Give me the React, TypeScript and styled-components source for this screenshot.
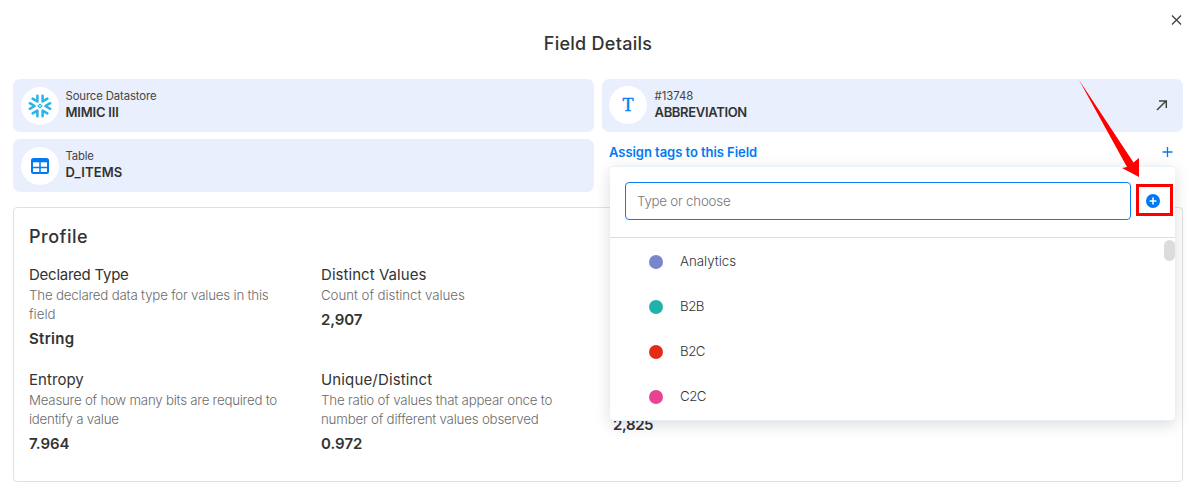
import React from "react";
import styled, { createGlobalStyle } from "styled-components";

const Global = createGlobalStyle`
  * { box-sizing: border-box; }
  body { margin: 0; background: #fff; color: #333; font-family: Inter, "Liberation Sans", sans-serif; }
`;

const Dialog = styled.main`
  position: relative;
  width: 1196px;
  height: 494px;
  padding: 0 13px;
  overflow: hidden;
  display: flex;
  flex-direction: column;
`;
const Header = styled.header`
  height: 79px;
  padding-top: 32px;
  text-align: center;
`;
const Title = styled.h1<{ $track?: number }>`
  margin: 0;
  font-size: 18px;
  line-height: 24px;
  font-weight: 500;
  white-space: nowrap;
  letter-spacing: ${(p) => p.$track ?? 0}px;
`;
const CloseButton = styled.button`
  position: absolute;
  top: 15px;
  right: 14px;
  width: 11px;
  height: 11px;
  padding: 0;
  border: 0;
  background: none;
  svg { display: block; }
`;
const Columns = styled.section`
  display: grid;
  grid-template-columns: 1fr 1fr;
  column-gap: 8px;
  height: 128px;
`;
const Column = styled.div`
  position: relative;
  display: flex;
  flex-direction: column;
  gap: 7px;
`;
const InfoCard = styled.div`
  height: 53px;
  border-radius: 7px;
  background: #e9effc;
  padding: 0 15px 0 8px;
  display: flex;
  align-items: center;
  gap: 6.5px;
`;
const Badge = styled.div<{ $lift?: boolean }>`
  width: 38px;
  height: 38px;
  margin: ${(p) => (p.$lift ? "-1px 1px 0 -1px" : "0")};
  border-radius: 50%;
  background: #fff;
  display: flex;
  align-items: center;
  justify-content: center;
  flex: none;
`;
const TypeGlyph = styled.span`
  font: 400 18px/18px "Liberation Serif", serif;
  color: #0b7ff0;
  -webkit-text-stroke: 0.5px #0b7ff0;
`;
const InfoText = styled.div`
  flex: 1;
  margin-top: -2px;
`;
const InfoLabel = styled.div<{ $track: number }>`
  font-size: 11.3px;
  line-height: 16px;
  color: #444;
  letter-spacing: ${(p) => p.$track}px;
`;
const InfoValue = styled.div<{ $track: number }>`
  font-size: 13px;
  line-height: 17px;
  font-weight: 600;
  letter-spacing: ${(p) => p.$track}px;
`;
const AssignRow = styled.div`
  height: 26px;
  padding: 0 10px 0 7px;
  display: flex;
  align-items: center;
  justify-content: space-between;
  color: #007af5;
`;
const AssignLabel = styled.span`
  font-size: 13px;
  line-height: 18px;
  font-weight: 600;
  letter-spacing: -0.05px;
`;
const Popover = styled.div`
  position: absolute;
  z-index: 2;
  top: 87px;
  left: 8px;
  width: 565px;
  height: 255px;
  border-radius: 4px;
  background: #fff;
  border-top: 1px solid #e9f2fa;
  border-bottom: 1px solid #e4effa;
  box-shadow: 0 4px 16px rgba(0, 0, 0, 0.14);
`;
const SearchRow = styled.div`
  height: 71px;
  padding: 15px 15px 0;
  display: flex;
  gap: 15px;
  border-bottom: 1px solid #ddd;
`;
const SearchInput = styled.input`
  width: 506px;
  height: 38px;
  border: 1px solid #0b7ff0;
  border-radius: 4px;
  padding: 0 11px;
  font: 300 13.3px Inter, sans-serif;
  letter-spacing: -0.22px;
  outline: 0;
  &::placeholder { color: #777; opacity: 1; }
`;
const AddIcon = styled.svg`
  margin-top: 12px;
  flex: none;
`;
const TagList = styled.ul`
  list-style: none;
  margin: 0;
  padding: 0 0 0 39px;
`;
const TagItem = styled.li<{ $track: number }>`
  height: 45px;
  display: flex;
  align-items: center;
  gap: 17px;
  font-size: 13.3px;
  font-weight: 300;
  color: #333;
  letter-spacing: ${(p) => p.$track}px;
`;
const Dot = styled.span<{ $color: string }>`
  width: 14px;
  height: 14px;
  margin-top: 2px;
  border-radius: 50%;
  background: ${(p) => p.$color};
`;
const ScrollThumb = styled.div`
  position: absolute;
  right: 0;
  top: 73px;
  width: 11px;
  height: 21px;
  border-radius: 6px;
  background: #dcdcdc;
`;
const Highlight = styled.div`
  position: absolute;
  z-index: 3;
  left: 1136px;
  top: 184px;
  width: 37px;
  height: 32px;
  border: 3px solid #fe0000;
`;
const Pointer = styled.svg`
  position: absolute;
  z-index: 3;
  left: 1076px;
  top: 78px;
`;
const Profile = styled.section`
  height: 275px;
  border: 1px solid #e0e0e0;
  border-radius: 4px;
  padding-top: 17px;
`;
const ProfileHead = styled.div`
  padding-left: 15px;
  height: 40px;
`;
const Metrics = styled.div`
  display: grid;
  grid-template-columns: repeat(4, 292px);
  grid-auto-rows: 105px;
`;
const Metric = styled.div`
  padding-left: 15px;
  white-space: nowrap;
`;
const MetricName = styled.div<{ $track: number }>`
  font-size: 15px;
  line-height: 20px;
  margin-bottom: 1px;
  letter-spacing: ${(p) => p.$track}px;
`;
const MetricLine = styled.div<{ $track: number }>`
  font-size: 13.3px;
  line-height: 19px;
  font-weight: 300;
  color: #6c6c6c;
  letter-spacing: ${(p) => p.$track}px;
`;
const MetricValue = styled.div<{ $track: number }>`
  margin-top: 4px;
  font-size: 15px;
  line-height: 22px;
  font-weight: 600;
  letter-spacing: ${(p) => p.$track}px;
`;
const CoveredMetric = styled(Metric)`
  padding-top: 40px;
`;

type Tracked = [string, number];
type MetricData = { name: Tracked; lines: Tracked[]; value: Tracked };

const metrics: (MetricData | null)[] = [
  { name: ["Declared Type", -0.25], lines: [["The declared data type for values in this", -0.2], ["field", 0]], value: ["String", 0.3] },
  { name: ["Distinct Values", 0.05], lines: [["Count of distinct values", -0.06]], value: ["2,907", -0.1] },
  null,
  null,
  { name: ["Entropy", 0.05], lines: [["Measure of how many bits are required to", -0.24], ["identify a value", -0.25]], value: ["7.964", 0] },
  { name: ["Unique/Distinct", 0.15], lines: [["The ratio of values that appear once to", -0.19], ["number of different values observed", -0.21]], value: ["0.972", 0] },
];

const tags: [string, string, number][] = [
  ["Analytics", "#7986cb", 0],
  ["B2B", "#20b2aa", -0.5],
  ["B2C", "#e22b18", -0.5],
  ["C2C", "#e84393", -0.5],
];

const SnowflakeIcon = () => (
  <svg width="24" height="24" viewBox="0 0 24 24" fill="none" stroke="#29b5e8" strokeWidth="2.5" strokeLinecap="round" strokeLinejoin="round">
    <path d="M9.4 1.7V7.4L4.6 4.6M14.6 1.7V7.4L19.4 4.6M9.4 22.3V16.6L4.6 19.4M14.6 22.3V16.6L19.4 19.4" />
    <path d="M1.8 9.2L6.6 12L1.8 14.8M22.2 9.2L17.4 12L22.2 14.8" />
    <path d="M12 10.1L13.9 12L12 13.9L10.1 12Z" strokeWidth="1.2" />
  </svg>
);

const TableIcon = () => (
  <svg width="18" height="16" viewBox="0 0 18 16">
    <rect x="1" y="1" width="16" height="14" rx="1.5" fill="#fff" stroke="#007af5" strokeWidth="2" />
    <path d="M1 9.5h16M9 4v11" stroke="#007af5" strokeWidth="1.5" />
    <path d="M1 2.8h16" stroke="#007af5" strokeWidth="3" />
  </svg>
);

export default function App() {
  return (
    <Dialog>
      <Global />
      <Header>
        <Title $track={0.27}>Field Details</Title>
        <CloseButton aria-label="Close">
          <svg width="11" height="11" viewBox="0 0 11 11"><path d="M1 .5l9 9M10 .5l-9 9" stroke="#444" strokeWidth="1.4" /></svg>
        </CloseButton>
      </Header>
      <Columns>
        <Column>
          <InfoCard>
            <Badge><SnowflakeIcon /></Badge>
            <InfoText>
              <InfoLabel $track={-0.1}>Source Datastore</InfoLabel>
              <InfoValue $track={-0.2}>MIMIC III</InfoValue>
            </InfoText>
          </InfoCard>
          <InfoCard>
            <Badge><TableIcon /></Badge>
            <InfoText>
              <InfoLabel $track={-0.2}>Table</InfoLabel>
              <InfoValue $track={0.15}>D_ITEMS</InfoValue>
            </InfoText>
          </InfoCard>
        </Column>
        <Column>
          <InfoCard>
            <Badge $lift><TypeGlyph>T</TypeGlyph></Badge>
            <InfoText>
              <InfoLabel $track={0}>#13748</InfoLabel>
              <InfoValue $track={-0.33}>ABBREVIATION</InfoValue>
            </InfoText>
            <svg width="12" height="12" viewBox="0 0 12 12"><path d="M1 10L10 1M3 1h7.3v7" fill="none" stroke="#444" strokeWidth="1.5" /></svg>
          </InfoCard>
          <AssignRow>
            <AssignLabel>Assign tags to this Field</AssignLabel>
            <svg width="11" height="11" viewBox="0 0 11 11"><path d="M5.5 0v10M0.5 5h10" stroke="#007af5" strokeWidth="1.3" /></svg>
          </AssignRow>
          <Popover>
            <SearchRow>
              <SearchInput placeholder="Type or choose" />
              <AddIcon width="14" height="14" viewBox="0 0 14 14">
                <circle cx="7" cy="7" r="7" fill="#007af5" />
                <path d="M7 3.6v6.8M3.6 7h6.8" stroke="#fff" strokeWidth="1.5" />
              </AddIcon>
            </SearchRow>
            <TagList>
              {tags.map(([name, color, track]) => (
                <TagItem key={name} $track={track}><Dot $color={color} />{name}</TagItem>
              ))}
            </TagList>
            <ScrollThumb />
          </Popover>
        </Column>
      </Columns>
      <Profile>
        <ProfileHead><Title as="h2" $track={0.5}>Profile</Title></ProfileHead>
        <Metrics>
          {metrics.map((m, i) =>
            m ? (
              <Metric key={i}>
                <MetricName $track={m.name[1]}>{m.name[0]}</MetricName>
                {m.lines.map(([t, k]) => <MetricLine key={t} $track={k}>{t}</MetricLine>)}
                <MetricValue $track={m.value[1]}>{m.value[0]}</MetricValue>
              </Metric>
            ) : (
              <Metric key={i} />
            )
          )}
          <CoveredMetric><MetricValue $track={-0.4}>2,825</MetricValue></CoveredMetric>
        </Metrics>
      </Profile>
      <Highlight />
      <Pointer width="66" height="102" viewBox="0 0 66 102">
        <path d="M3 2L57.5 84.5L63 80V99L46 90L51 89Z" fill="#fe0000" />
      </Pointer>
    </Dialog>
  );
}
